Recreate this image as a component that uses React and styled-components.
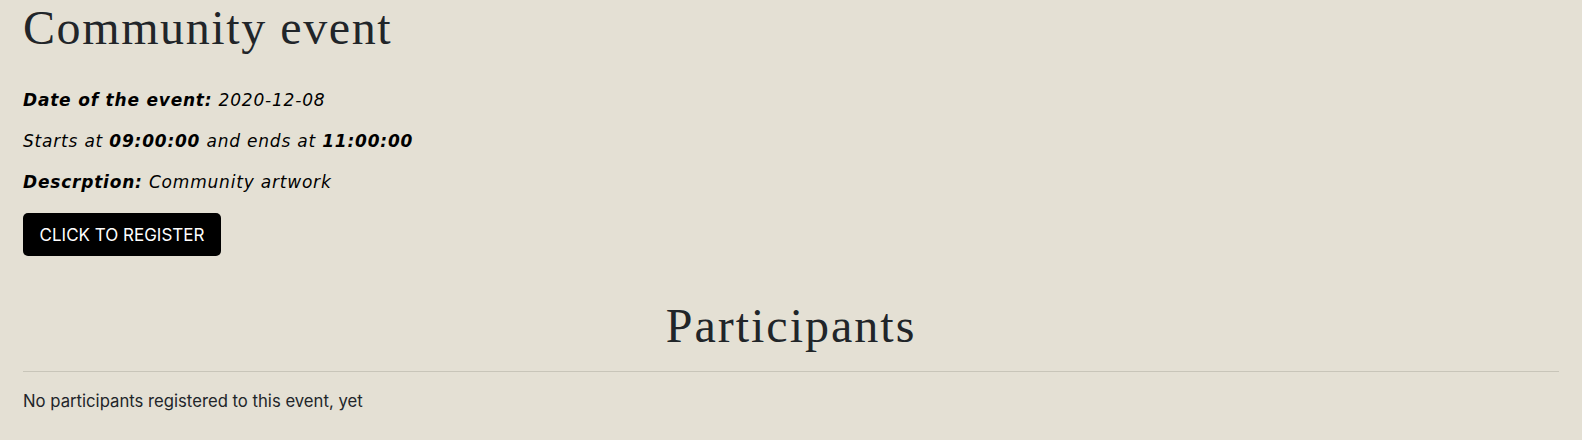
import React from 'react';
import styled, { createGlobalStyle } from 'styled-components';

const GlobalStyle = createGlobalStyle`
  body {
    margin: 0;
    background-color: #e4e0d4;
    font-family: Inter, "Liberation Sans", sans-serif;
    color: #212529;
  }
`;

const Page = styled.div`
  padding: 0 23px;
`;

const Title = styled.h1`
  margin: 0;
  padding-top: 2px;
  font-family: "Liberation Serif", serif;
  font-weight: 400;
  font-size: 48px;
  line-height: 52px;
  letter-spacing: 1.6px;
  color: #212529;
`;

const Details = styled.div`
  margin-top: 36px;
  display: flex;
  flex-direction: column;
  gap: 20px;
`;

const Line = styled.p`
  margin: 0;
  font-family: "DejaVu Sans", sans-serif;
  font-style: italic;
  font-size: 17px;
  line-height: 21px;
  letter-spacing: 0.8px;
  color: #000;

  b {
    font-weight: 700;
  }
`;

const RegisterButton = styled.button`
  margin-top: 20px;
  width: 198px;
  height: 43px;
  border: none;
  border-radius: 5px;
  background: #000;
  color: #fff;
  font-family: Inter, "Liberation Sans", sans-serif;
  font-size: 17px;
  cursor: pointer;
`;

const Section = styled.section`
  margin-top: 42px;
`;

const SectionTitle = styled.h2`
  margin: 0;
  text-align: center;
  font-family: "Liberation Serif", serif;
  font-weight: 400;
  font-size: 48px;
  line-height: 56px;
  letter-spacing: 2px;
  color: #212529;
`;

const Divider = styled.hr`
  margin: 17px 0 0;
  border: none;
  border-top: 1px solid #c8c5b9;
`;

const Empty = styled.p`
  margin: 19px 0 0;
  font-size: 16.7px;
  color: #212529;
`;

export default function App() {
  return (
    <>
      <GlobalStyle />
      <Page>
        <Title>Community event</Title>
        <Details>
          <Line><b>Date of the event:</b> 2020-12-08</Line>
          <Line>Starts at <b>09:00:00</b> and ends at <b>11:00:00</b></Line>
          <Line><b>Descrption:</b> Community artwork</Line>
        </Details>
        <RegisterButton>CLICK TO REGISTER</RegisterButton>
        <Section>
          <SectionTitle>Participants</SectionTitle>
          <Divider />
          <Empty>No participants registered to this event, yet</Empty>
        </Section>
      </Page>
    </>
  );
}
